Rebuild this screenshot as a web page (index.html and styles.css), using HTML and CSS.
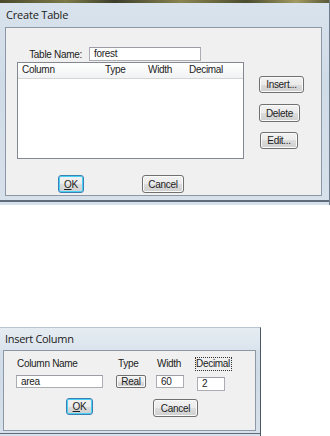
FILE: index.html
```html
<!DOCTYPE html>
<html>
<head>
    <title>Create Table</title>
    <meta name="viewport" content="width=device-width, initial-scale=1">
    <link rel="stylesheet" href="styles.css">
</head>
<body>
    <!-- Create Table dialog -->
    <div class="window create-table">
        <div class="desktop-strip"></div>
        <div class="titlebar">Create Table</div>
        <div class="client">
            <div class="main-row">
                <div class="main-col">
                    <div class="name-row">
                        <label class="name-label">Table Name:</label>
                        <div class="textbox name-box">forest</div>
                    </div>
                    <div class="listbox">
                        <div class="list-header">
                            <span class="col col-name">Column</span>
                            <span class="col col-type">Type</span>
                            <span class="col col-width">Width</span>
                            <span class="col col-dec">Decimal</span>
                        </div>
                    </div>
                </div>
                <div class="side-buttons">
                    <button class="btn btn-insert">Insert...</button>
                    <button class="btn btn-delete">Delete</button>
                    <button class="btn btn-edit">Edit...</button>
                </div>
            </div>
            <div class="bottom-row">
                <button class="btn btn-default btn-ok"><u>O</u>K</button>
                <button class="btn btn-cancel">Cancel</button>
            </div>
        </div>
        <div class="frame-bottom"></div>
    </div>

    <!-- Insert Column dialog -->
    <div class="window insert-column">
        <div class="titlebar small">Insert Column</div>
        <div class="client">
            <div class="field-row">
                <div class="field f-name">
                    <span class="field-label">Column Name</span>
                    <div class="textbox">area</div>
                </div>
                <div class="field f-type">
                    <span class="field-label">Type</span>
                    <button class="btn btn-real">Real</button>
                </div>
                <div class="field f-width">
                    <span class="field-label">Width</span>
                    <div class="textbox">60</div>
                </div>
                <div class="field f-dec">
                    <span class="field-label focused">Decimal</span>
                    <div class="textbox">2</div>
                </div>
            </div>
            <div class="bottom-row">
                <button class="btn btn-default btn-ok2"><u>O</u>K</button>
                <button class="btn btn-cancel2">Cancel</button>
            </div>
        </div>
        <div class="frame-bottom"></div>
    </div>
</body>
</html>
```

FILE: styles.css
```css
/* General */
body, html {
    margin: 0;
    background-color: #ffffff;
    color: #1c1c1c;
    font-family: 'Liberation Sans', Arial, sans-serif;
    font-size: 10px;
    letter-spacing: -0.3px;
}

body {
    width: 330px;
    height: 436px;
    overflow: hidden;
}

/* Window frame */
.window {
    background: linear-gradient(#d9e3ed, #cfdbe7 40%, #d7e1eb);
    box-sizing: border-box;
}

.create-table {
    width: 330px;
    height: 205px;
    border-right: 1px solid #6f7d8a;
}

.insert-column {
    width: 261px;
    height: 109px;
    margin-top: 122px;
    border-right: 1px solid #4b5866;
    border-top: 1px solid #b8c4d0;
}

.desktop-strip {
    height: 3px;
    background: linear-gradient(90deg, #4a4a2c, #7d7a48 20%, #3c3e2b 35%, #8a8450 55%, #4b4c30 75%, #a29a60 90%, #5b5a3a);
}

.titlebar {
    height: 24px;
    line-height: 24px;
    padding-left: 6px;
    font-family: 'Open Sans', 'Noto Sans', sans-serif;
    font-size: 11px;
    letter-spacing: -0.2px;
    color: #1a1a1a;
}

.titlebar.small {
    height: 22px;
    line-height: 22px;
    padding-left: 5px;
    letter-spacing: -0.3px;
    background: linear-gradient(#e6ecf2, #dbe4ed);
}

.client {
    background-color: #f0f0f0;
    border: 1px solid #8c98a5;
    box-sizing: border-box;
}

.create-table .client {
    margin: 0 7px 0 5px;
    height: 169px;
    padding-top: 19px;
}

.insert-column .client {
    margin: 0 4px 0 3px;
    height: 81px;
    padding-top: 6px;
}

.frame-bottom {
    height: 4px;
    border-bottom: 2px solid #5f6c79;
}

.insert-column .frame-bottom {
    height: 2px;
    border-bottom: 1px solid #5f6c79;
}

/* Text boxes */
.textbox {
    background-color: #ffffff;
    border: 1px solid #abadb3;
    border-top-color: #9a9da5;
    box-sizing: border-box;
    height: 14px;
    line-height: 12px;
    padding-left: 4px;
}

/* Buttons */
.btn {
    font-family: 'Liberation Sans', Arial, sans-serif;
    font-size: 10px;
    letter-spacing: -0.3px;
    color: #1c1c1c;
    padding: 0;
    border: 1px solid #707070;
    border-radius: 3px;
    background: linear-gradient(#f2f2f2, #ebebeb 50%, #dddddd 50%, #cfcfcf);
    box-shadow: inset 0 0 0 1px #fbfbfb;
    box-sizing: border-box;
    cursor: pointer;
}

.btn-default {
    border-color: #3c7fb1;
    box-shadow: inset 0 0 0 1px #48d1f7;
}

/* Create Table layout */
.main-row {
    display: flex;
}

.main-col {
    display: flex;
    flex-direction: column;
}

.name-row {
    display: flex;
    align-items: center;
    height: 14px;
}

.name-label {
    width: 76px;
    text-align: right;
    margin-right: 7px;
}

.name-box {
    width: 112px;
}

.listbox {
    margin-top: 1px;
    margin-left: 11px;
    width: 227px;
    height: 97px;
    background-color: #ffffff;
    border: 1px solid #828790;
    box-sizing: border-box;
}

.list-header {
    height: 15px;
    line-height: 14px;
    background: linear-gradient(#ffffff, #f1f2f4);
    border-bottom: 1px solid #d5d5d5;
    position: relative;
}

.col {
    position: absolute;
    top: 0;
}

.col-name { left: 4px; }
.col-type { left: 87px; }
.col-width { left: 130px; }
.col-dec { left: 171px; }

.side-buttons {
    display: flex;
    flex-direction: column;
    align-items: flex-start;
    margin-left: 15px;
    padding-top: 29px;
}

.btn-insert {
    width: 45px;
    height: 17px;
}

.btn-delete {
    width: 41px;
    height: 18px;
    margin-top: 11px;
}

.btn-edit {
    width: 38px;
    height: 17px;
    margin-top: 10px;
    margin-left: 1px;
}

.create-table .bottom-row {
    display: flex;
    margin-top: 16px;
    padding-left: 52px;
}

.btn-ok {
    width: 26px;
    height: 18px;
}

.btn-cancel {
    width: 42px;
    height: 18px;
    margin-left: 58px;
}

/* Insert Column layout */
.field-row {
    display: flex;
    padding-left: 12px;
}

.field {
    display: flex;
    flex-direction: column;
    align-items: flex-start;
}

.field-label {
    height: 12px;
    line-height: 12px;
    margin-bottom: 4px;
    border: 1px dotted transparent;
}

.field-label.focused {
    border-color: #333333;
    padding-right: 1px;
}

.f-name .textbox {
    width: 87px;
    height: 13px;
}

.f-type {
    margin-left: 13px;
}

.f-type .field-label {
    margin-left: 1px;
}

.btn-real {
    width: 30px;
    height: 13px;
    line-height: 11px;
    border-radius: 2px;
}

.f-width {
    margin-left: 10px;
}

.f-width .textbox {
    width: 28px;
    height: 13px;
}

.f-dec {
    margin-left: 11px;
}

.f-dec .textbox {
    width: 28px;
    margin-left: 2px;
    margin-top: 2px;
}

.insert-column .bottom-row {
    display: flex;
    align-items: flex-start;
    margin-top: 7px;
    padding-left: 62px;
}

.btn-ok2 {
    width: 27px;
    height: 17px;
}

.btn-cancel2 {
    width: 45px;
    height: 18px;
    margin-left: 60px;
    margin-top: 1px;
}
```
